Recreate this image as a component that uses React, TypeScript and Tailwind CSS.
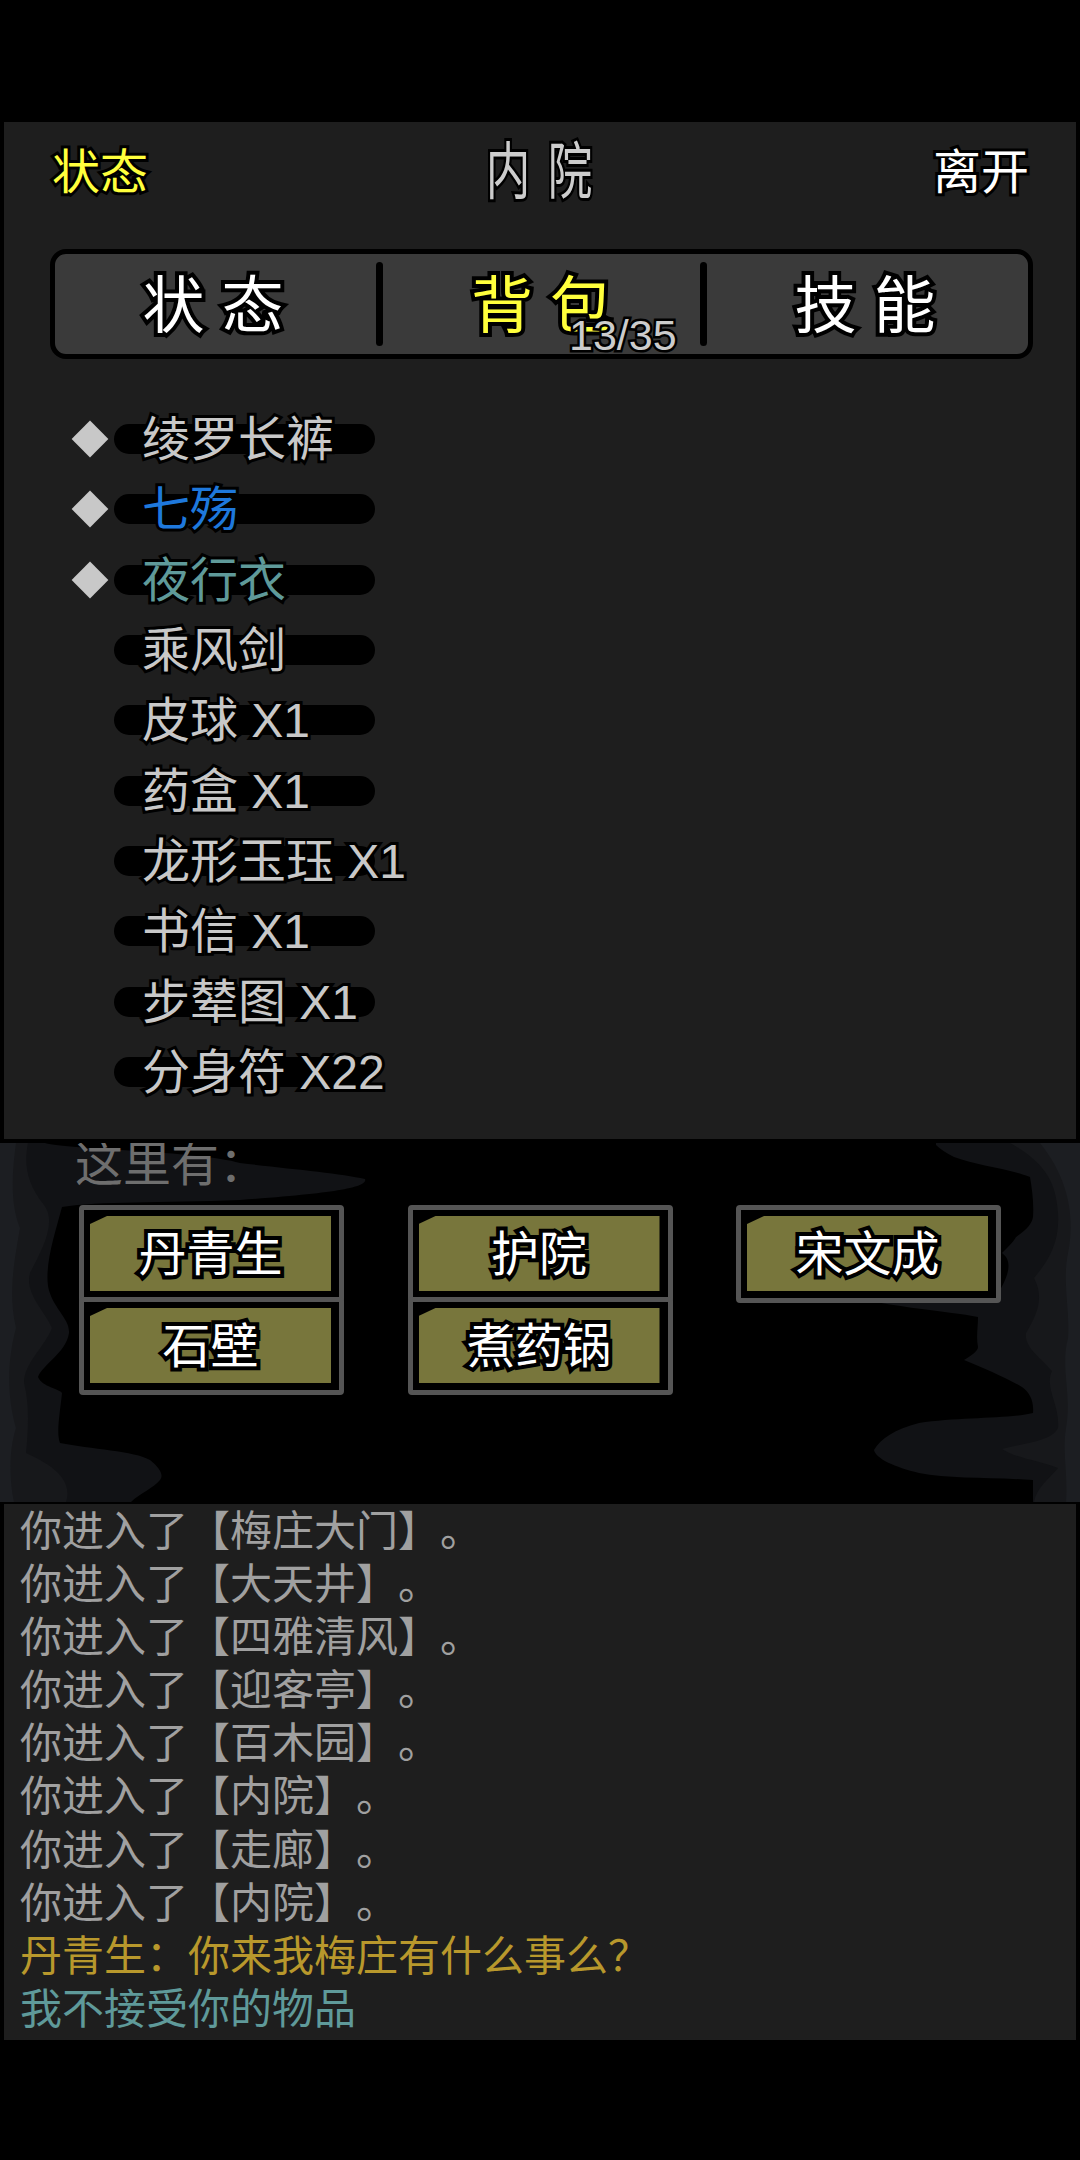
const font = "font-['Liberation_Sans','Noto_Sans_CJK_SC',sans-serif]";

const items = [
  { name: "绫罗长裤", worn: true, color: "text-[#c8c8c8]" },
  { name: "七殇", worn: true, color: "text-[#1e78dc]" },
  { name: "夜行衣", worn: true, color: "text-[#5f9a9a]" },
  { name: "乘风剑", worn: false, color: "text-[#c8c8c8]" },
  { name: "皮球 X1", worn: false, color: "text-[#c8c8c8]" },
  { name: "药盒 X1", worn: false, color: "text-[#c8c8c8]" },
  { name: "龙形玉珏 X1", worn: false, color: "text-[#c8c8c8]" },
  { name: "书信 X1", worn: false, color: "text-[#c8c8c8]" },
  { name: "步辇图 X1", worn: false, color: "text-[#c8c8c8]" },
  { name: "分身符 X22", worn: false, color: "text-[#c8c8c8]" },
];

const people = ["丹青生", "护院", "宋文成", "石壁", "煮药锅"];

const rooms = ["梅庄大门", "大天井", "四雅清风", "迎客亭", "百木园", "内院", "走廊", "内院"];

function InkWash() {
  return (
    <svg className="absolute inset-0 h-full w-full" viewBox="0 0 1080 359" preserveAspectRatio="none">
      {/* left side */}
      <path
        d="M0 0H45C60 6 200 8 240 20C290 26 340 30 365 36C368 44 340 50 240 57C160 60 100 58 62 64C55 90 45 120 48 143C52 165 70 175 69 190C66 210 42 222 38 234C42 244 60 246 62 250C60 270 56 290 60 300C90 306 135 308 150 317C160 325 164 332 160 337C154 345 140 350 131 359H0Z"
        fill="#111215"
      />
      <path
        d="M0 0H28C24 20 26 40 44 62C58 80 40 110 30 130C24 150 46 170 52 185C44 205 24 220 24 240C30 262 28 290 26 310C48 320 74 335 66 359H0Z"
        fill="#17181b"
      />
      <path
        d="M0 0H16C12 30 10 60 20 85C14 120 8 150 16 185C8 215 6 250 16 285C8 310 10 340 14 359H0Z"
        fill="#1c1e22"
      />
      {/* right side */}
      <path
        d="M936 0H1080V359H1033V337C990 334 950 336 919 330C895 324 876 316 874 307C880 296 895 286 919 280C960 274 1010 276 1033 270C1034 258 1030 250 1022 244C1005 234 985 226 964 217C972 212 978 208 978 204C976 194 978 184 978 174C950 168 880 164 823 147H1000C1012 126 1010 116 1002 110C1010 102 1014 98 1016 94C1028 86 1032 80 1033 74C1034 60 1032 46 1030 34C1010 26 975 22 954 14C946 10 940 6 936 2Z"
        fill="#111215"
      />
      <path
        d="M1010 0H1080V359H1034C1036 345 1050 335 1058 325C1040 318 1015 315 1002 306C1025 300 1052 298 1058 285C1060 262 1044 244 1052 228C1040 214 1024 204 1026 190C1038 170 1044 154 1034 135C1048 118 1060 100 1058 70C1056 40 1046 20 1010 0Z"
        fill="#17181b"
      />
      <path
        d="M1040 0H1080V359H1066C1068 330 1062 310 1066 285C1072 250 1060 225 1068 195C1070 165 1062 140 1068 110C1074 80 1072 40 1040 0Z"
        fill="#1c1e22"
      />
    </svg>
  );
}

function PersonButton({ label }: { label: string }) {
  return (
    <button
      type="button"
      className="h-[98px] w-[265px] rounded-[4px] border-[5px] border-[#555555] bg-black pt-[6px] pb-[7px] pl-[6px] pr-[8px]"
    >
      <span className="flex h-[75px] items-center justify-center bg-[#78763c] pt-[3px] [clip-path:polygon(17px_0,100%_0,100%_100%,0_100%,0_8px)]">
        <span className="text-[48px] leading-none text-white [-webkit-text-stroke:8px_black] [paint-order:stroke_fill]">
          {label}
        </span>
      </span>
    </button>
  );
}

export default function App() {
  return (
    <div lang="zh-CN" className={`${font} min-h-[2160px] bg-black pt-[122px]`}>
      <div className="mx-[4px] h-[1017px] bg-[#1e1e1e]">
        <div className="flex h-[100px] items-center justify-between pt-[2px] pl-[48px] pr-[47px]">
          <button
            type="button"
            className="text-[48px] leading-none text-[#ffff3c] [-webkit-text-stroke:6px_black] [paint-order:stroke_fill]"
          >
            状态
          </button>
          <h1 className="-ml-[4px] flex w-[124px] justify-between text-[62px] leading-none text-[#cccccc] [-webkit-text-stroke:6px_black] [paint-order:stroke_fill]">
            <span className="inline-block [transform:scaleX(.72)]">内</span>
            <span className="inline-block [transform:scaleX(.72)]">院</span>
          </h1>
          <button
            type="button"
            className="text-[48px] leading-none text-white [-webkit-text-stroke:6px_black] [paint-order:stroke_fill]"
          >
            离开
          </button>
        </div>

        <div className="mt-[27px] ml-[46px] flex h-[110px] w-[983px] items-center rounded-[16px] border-[5px] border-black bg-[#3a3a3a]">
          <div className="flex-1 pt-[6px] pr-[5px] text-center text-[62px] leading-none whitespace-pre text-white [-webkit-text-stroke:8px_black] [paint-order:stroke_fill]">
            状 态
          </div>
          <div className="h-[84px] w-[7px] rounded-full bg-black" />
          <div className="relative w-[317px] flex-none pt-[6px] text-center text-[62px] leading-none whitespace-pre text-[#ffff3c] [-webkit-text-stroke:8px_black] [paint-order:stroke_fill]">
            背 包
            <span className="absolute top-[44px] left-[186px] text-[43px] leading-none text-[#cccccc] [-webkit-text-stroke:5px_black]">
              13/35
            </span>
          </div>
          <div className="h-[84px] w-[7px] rounded-full bg-black" />
          <div className="flex-1 pt-[6px] pr-[5px] text-center text-[62px] leading-none whitespace-pre text-white [-webkit-text-stroke:8px_black] [paint-order:stroke_fill]">
            技 能
          </div>
        </div>

        <ul className="mt-[45px]">
          {items.map((item) => (
            <li key={item.name} className="flex h-[70.3px] items-center">
              <span className="ml-[68px] flex w-[42px] justify-start pl-[5px]">
                {item.worn && <span className="h-[26px] w-[26px] rotate-45 bg-[#c8c8c8]" />}
              </span>
              <div className="h-[30px] w-[261px] rounded-full bg-black pl-[28px]">
                <span
                  className={`block pt-[1px] text-[48px] leading-[30px] whitespace-nowrap ${item.color} [-webkit-text-stroke:6px_black] [paint-order:stroke_fill]`}
                >
                  {item.name}
                </span>
              </div>
            </li>
          ))}
        </ul>
      </div>

      <div className="relative mt-[4px] h-[359px] overflow-hidden bg-black">
        <InkWash />
        <div className="relative">
          <p className="-mt-[5px] ml-[75px] h-[54px] text-[48px] leading-[54px] text-[#6e6e6e] [text-spacing-trim:space-all]">
            {"这里有\uFF1A"}
          </p>
          <div className="mt-[13px] ml-[79px] grid w-[922px] grid-cols-[265px_265px_265px] grid-rows-[92px_92px] justify-between">
            {people.map((name) => (
              <PersonButton key={name} label={name} />
            ))}
          </div>
        </div>
      </div>

      <div className="mx-[4px] mt-[2px] h-[536px] bg-[#1e1e1e] pt-[1px] pl-[16px] text-[42px] leading-[53.1px] [text-spacing-trim:space-all]">
        {rooms.map((room, i) => (
          <p key={i} className="text-[#a0a0a0]">
            你进入了【{room}】。
          </p>
        ))}
        <p className="text-[#b8982c]">{"丹青生\uFF1A你来我梅庄有什么事么\uFF1F"}</p>
        <p className="text-[#5f9a9a]">我不接受你的物品</p>
      </div>
    </div>
  );
}
